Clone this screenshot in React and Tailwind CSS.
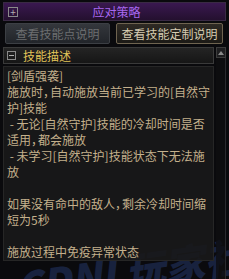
import React from "react";

const Comma = () => <span className="mr-[-5px]">，</span>;

const lines = [
  <>[剑盾强袭]</>,
  <>施放时<Comma />自动施放当前已学习的[自然守</>,
  <>护]技能</>,
  <>&nbsp;- 无论[自然守护]技能的冷却时间是否</>,
  <>适用<Comma />都会施放</>,
  <>&nbsp;- 未学习[自然守护]技能状态下无法施</>,
  <>放</>,
  <>&nbsp;</>,
  <>如果没有命中的敌人<Comma />剩余冷却时间缩</>,
  <>短为5秒</>,
  <>&nbsp;</>,
  <>施放过程中免疫异常状态</>,
];

export default function App() {
  return (
    <div
      className="relative w-[229px] h-[279px] overflow-hidden bg-[#0a0a0d] text-[12px] leading-[16px]"
      style={{ fontFamily: '"Noto Sans CJK SC", "Noto Sans", sans-serif' }}
    >
      {/* watermark (behind) */}
      <div className="pointer-events-none absolute left-[14px] top-[246px] -rotate-[8deg] text-[40px] leading-[42px] font-black italic text-[#3a5ab0] opacity-[0.3] whitespace-nowrap">
        CDNL玩家社区
      </div>

      <div className="relative flex flex-col pl-[3px] pr-[3px] pt-[2px]">
        {/* title bar */}
        <div className="relative flex items-center justify-center h-[19px] w-[223px] border border-[#3a2a44] bg-gradient-to-b from-[#3a1850] to-[#24102f]">
          <div className="absolute left-[4px] top-[4px] w-[10px] h-[10px] border border-[#8a8a8a] flex items-center justify-center text-[#b0b0b0] text-[10px] leading-[10px]">
            +
          </div>
          <span className="text-[#a868f0] text-[12px] leading-[14px] pl-[4px]">应对策略</span>
        </div>

        {/* buttons */}
        <div className="flex gap-[6px] mt-[2px] pl-[2px]">
          <div className="w-[105px] h-[21px] flex items-center justify-center rounded-[2px] border border-[#3c3f44] bg-gradient-to-b from-[#34373c] to-[#22252a] text-[#6c6e70]">
            查看技能点说明
          </div>
          <div className="w-[107px] h-[21px] flex items-center justify-center rounded-[2px] border border-[#6f6450] bg-gradient-to-b from-[#2e2a24] to-[#1c1a16] text-[#d6ccb2]">
            查看技能定制说明
          </div>
        </div>

        {/* section + scrollbar */}
        <div className="flex mt-[3px] gap-[2px]">
          <div className="flex flex-col w-[211px]">
            <div className="flex items-center h-[17px] border border-[#3a3a3a] bg-gradient-to-b from-[#242424] to-[#161616]">
              <div className="ml-[3px] w-[9px] h-[9px] border border-[#8a8a8a] flex items-center justify-center">
                <div className="w-[5px] h-[1px] bg-[#b0b0b0]" />
              </div>
              <span className="ml-[7px] text-[#e2c458]">技能描述</span>
            </div>
            <div className="mt-[2px] h-[195px] border border-[#262626] bg-[#18181a]/90 pl-[3px] pt-[1px] text-[#c4b08c] whitespace-nowrap">
              {lines.map((l, i) => (
                <div key={i} className="h-[16px]">
                  {l}
                </div>
              ))}
            </div>
          </div>
          <div className="flex flex-col w-[10px] h-[235px] border-r border-[#2a2a2e]">
            <div className="h-[11px] w-[10px] border border-[#3c3c3c] bg-[#1e1e20] flex items-center justify-center">
              <svg width="6" height="4" viewBox="0 0 6 4">
                <path d="M3 0 L6 4 L0 4 Z" fill="#8a8a8a" />
              </svg>
            </div>
            <div className="flex-1 bg-[#0e0e10]/80" />
          </div>
        </div>
      </div>
    </div>
  );
}
